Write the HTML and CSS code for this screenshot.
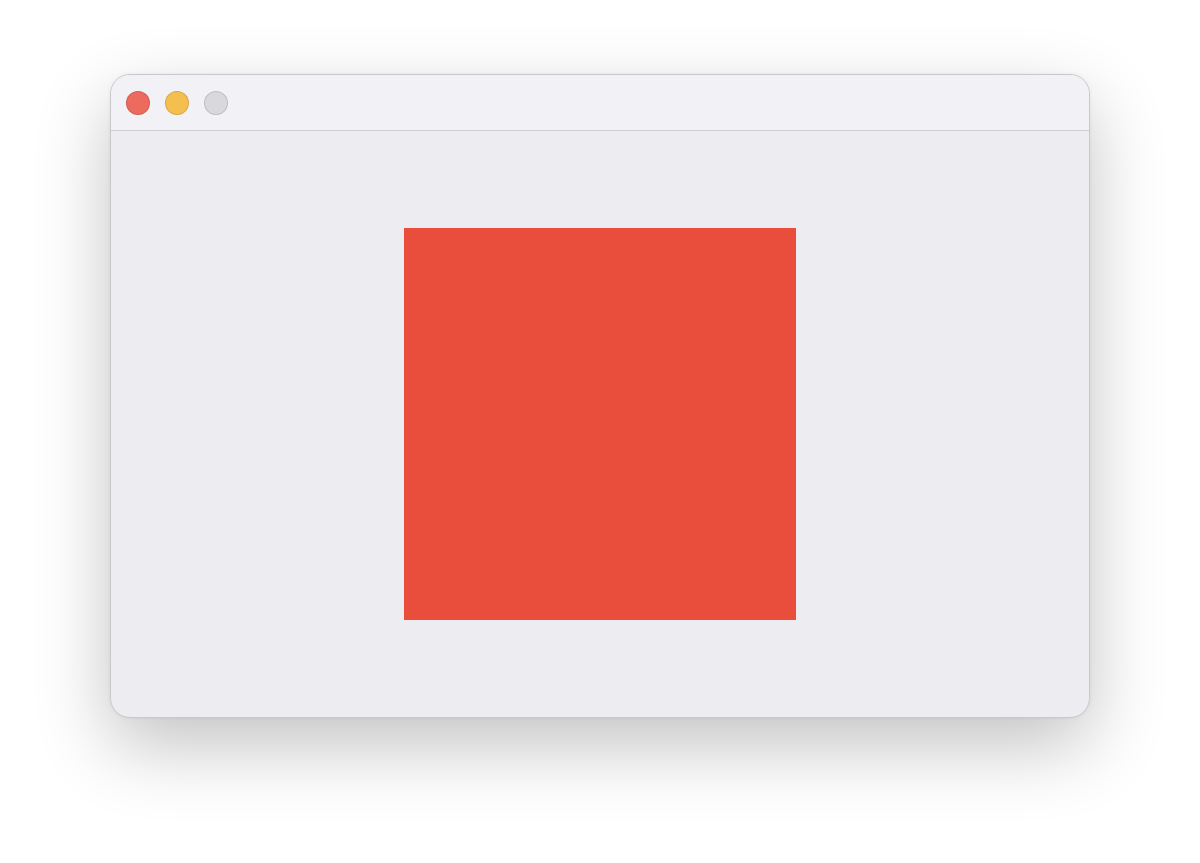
FILE: index.html
```html
<!DOCTYPE html>
<html lang="en">
<head>
    <meta charset="UTF-8">
    <meta name="viewport" content="width=device-width, initial-scale=1.0">
    <title>Window</title>
    <link rel="stylesheet" href="styles.css">
</head>
<body>
    <div class="window">
        <div class="titlebar">
            <span class="light close"></span>
            <span class="light minimize"></span>
            <span class="light zoom"></span>
        </div>
        <div class="content">
            <div class="square"></div>
        </div>
    </div>
</body>
</html>
```

FILE: styles.css
```css
html {
    background-color: #ffffff;
}

body {
    margin: 0;
    min-height: 100vh;
    padding: 74px 0 0;
    box-sizing: border-box;
    background-color: #ffffff;
    font-family: "Inter", sans-serif;
}

.window {
    width: 980px;
    height: 644px;
    margin: 0 auto;
    box-sizing: border-box;
    border: 1px solid #c9c8cd;
    border-radius: 20px;
    overflow: hidden;
    display: flex;
    flex-direction: column;
    background-color: #edecf1;
    box-shadow: 0 28px 75px rgba(0, 0, 0, 0.24), 0 0 4px rgba(0, 0, 0, 0.06);
}

.titlebar {
    height: 56px;
    flex-shrink: 0;
    box-sizing: border-box;
    background-color: #f2f1f6;
    border-bottom: 1px solid #cfced3;
    display: flex;
    align-items: center;
    gap: 15px;
    padding-left: 15px;
}

.light {
    width: 24px;
    height: 24px;
    box-sizing: border-box;
    border-radius: 50%;
    border: 1px solid rgba(0, 0, 0, 0.12);
}

.close { background-color: #ec6a5e; }
.minimize { background-color: #f5bf4f; }
.zoom { background-color: #d9d8dd; }

.content {
    flex: 1;
    display: flex;
    justify-content: center;
    align-items: center;
}

.square {
    width: 392px;
    height: 392px;
    background-color: #e94d3c;
}
```
